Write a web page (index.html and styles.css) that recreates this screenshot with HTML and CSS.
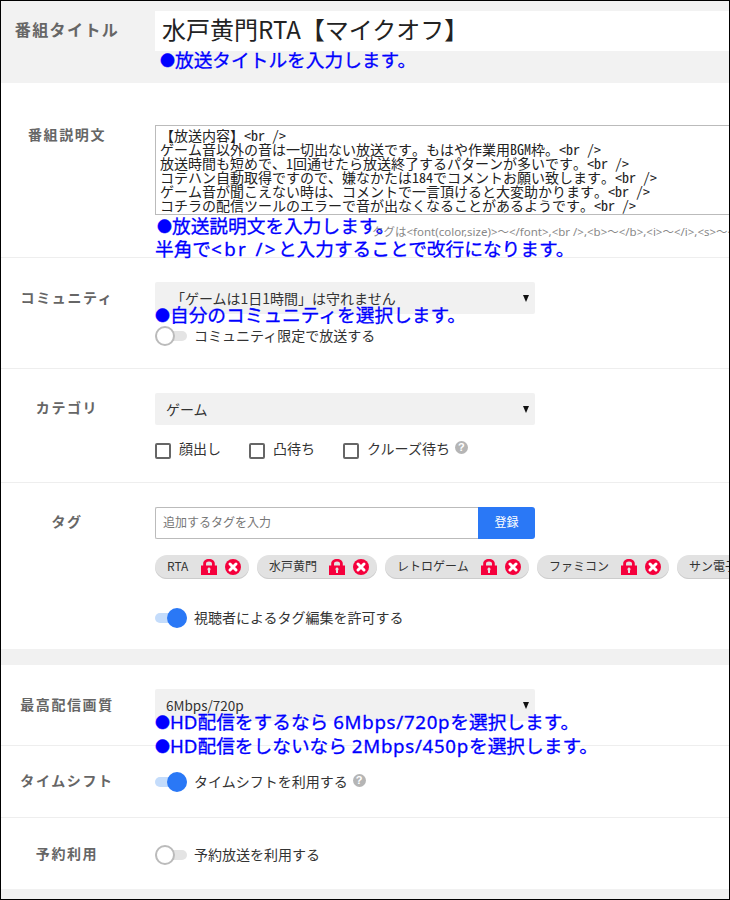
FILE: index.html
```html
<!DOCTYPE html>
<html lang="ja">
<head>
<meta charset="utf-8">
<title>番組設定</title>
<link rel="stylesheet" href="styles.css">
</head>
<body>
<main class="frame">
  <section class="row row-title">
    <h2 class="label label-strong">番組タイトル</h2>
    <div class="field">
      <div class="title-input">水戸黄門RTA【マイクオフ】</div>
    </div>
    <p class="note note-title"><span class="dot">●</span>放送タイトルを入力します。</p>
  </section>

  <section class="row row-desc">
    <h2 class="label">番組説明文</h2>
    <div class="field">
      <textarea class="desc" readonly rows="6" wrap="off">【放送内容】&lt;br /&gt;
ゲーム音以外の音は一切出ない放送です。もはや作業用BGM枠。&lt;br /&gt;
放送時間も短めで、1回通せたら放送終了するパターンが多いです。&lt;br /&gt;
コテハン自動取得ですので、嫌なかたは184でコメントお願い致します。&lt;br /&gt;
ゲーム音が聞こえない時は、コメントで一言頂けると大変助かります。&lt;br /&gt;
コチラの配信ツールのエラーで音が出なくなることがあるようです。&lt;br /&gt;</textarea>
      <p class="hint">タグは&lt;font(color,size)&gt;～&lt;/font&gt;,&lt;br /&gt;,&lt;b&gt;～&lt;/b&gt;,&lt;i&gt;～&lt;/i&gt;,&lt;s&gt;～&lt;/s&gt;</p>
    </div>
    <p class="note note-desc1"><span class="dot">●</span>放送説明文を入力します。</p>
    <p class="note note-desc2">半角で<span class="latin-wide">&lt;br /&gt;</span>と入力することで改行になります。</p>
  </section>

  <section class="row row-community">
    <h2 class="label">コミュニティ</h2>
    <div class="field">
      <div class="select select-wide">「ゲームは1日1時間」は守れません<span class="caret"></span></div>
      <div class="toggle-line toggle-community">
        <span class="toggle"><span class="knob"></span></span>
        <span class="toggle-text">コミュニティ限定で放送する</span>
      </div>
    </div>
    <p class="note note-community"><span class="dot">●</span>自分のコミュニティを選択します。</p>
  </section>

  <section class="row row-category">
    <h2 class="label">カテゴリ</h2>
    <div class="field">
      <div class="select">ゲーム<span class="caret"></span></div>
      <div class="checks">
        <label class="check"><span class="box"></span>顔出し</label>
        <label class="check"><span class="box"></span>凸待ち</label>
        <label class="check"><span class="box"></span>クルーズ待ち<span class="help help-check">?</span></label>
      </div>
    </div>
  </section>

  <section class="row row-tag">
    <h2 class="label">タグ</h2>
    <div class="field">
      <div class="tag-add">
        <div class="tag-input">追加するタグを入力</div>
        <div class="tag-btn">登録</div>
      </div>
      <div class="chips">
        <div class="chip chip-rta"><span class="chip-text">RTA</span>
          <svg class="lock" viewBox="0 0 16 16"><path class="lock-fill" d="M0 6.5h2.2V4.6C2.2 1.8 4.6 0 8 0s5.8 1.8 5.8 4.6v1.9H16V16H0z"/><path class="lock-hole" d="M5 6.5V4.8C5 3.4 6.2 2.6 8 2.6s3 .8 3 2.2v1.7zM8 8.6a1.6 1.6 0 0 1 1 2.8V14H7v-2.6a1.6 1.6 0 0 1 1-2.8z"/></svg>
          <svg class="del" viewBox="0 0 16 16"><circle class="del-bg" cx="8" cy="8" r="8"/><path class="del-x" d="M5 5l6 6M11 5l-6 6"/></svg>
        </div>
        <div class="chip chip-mito"><span class="chip-text">水戸黄門</span>
          <svg class="lock" viewBox="0 0 16 16"><path class="lock-fill" d="M0 6.5h2.2V4.6C2.2 1.8 4.6 0 8 0s5.8 1.8 5.8 4.6v1.9H16V16H0z"/><path class="lock-hole" d="M5 6.5V4.8C5 3.4 6.2 2.6 8 2.6s3 .8 3 2.2v1.7zM8 8.6a1.6 1.6 0 0 1 1 2.8V14H7v-2.6a1.6 1.6 0 0 1 1-2.8z"/></svg>
          <svg class="del" viewBox="0 0 16 16"><circle class="del-bg" cx="8" cy="8" r="8"/><path class="del-x" d="M5 5l6 6M11 5l-6 6"/></svg>
        </div>
        <div class="chip chip-retro"><span class="chip-text">レトロゲーム</span>
          <svg class="lock" viewBox="0 0 16 16"><path class="lock-fill" d="M0 6.5h2.2V4.6C2.2 1.8 4.6 0 8 0s5.8 1.8 5.8 4.6v1.9H16V16H0z"/><path class="lock-hole" d="M5 6.5V4.8C5 3.4 6.2 2.6 8 2.6s3 .8 3 2.2v1.7zM8 8.6a1.6 1.6 0 0 1 1 2.8V14H7v-2.6a1.6 1.6 0 0 1 1-2.8z"/></svg>
          <svg class="del" viewBox="0 0 16 16"><circle class="del-bg" cx="8" cy="8" r="8"/><path class="del-x" d="M5 5l6 6M11 5l-6 6"/></svg>
        </div>
        <div class="chip chip-fami"><span class="chip-text">ファミコン</span>
          <svg class="lock" viewBox="0 0 16 16"><path class="lock-fill" d="M0 6.5h2.2V4.6C2.2 1.8 4.6 0 8 0s5.8 1.8 5.8 4.6v1.9H16V16H0z"/><path class="lock-hole" d="M5 6.5V4.8C5 3.4 6.2 2.6 8 2.6s3 .8 3 2.2v1.7zM8 8.6a1.6 1.6 0 0 1 1 2.8V14H7v-2.6a1.6 1.6 0 0 1 1-2.8z"/></svg>
          <svg class="del" viewBox="0 0 16 16"><circle class="del-bg" cx="8" cy="8" r="8"/><path class="del-x" d="M5 5l6 6M11 5l-6 6"/></svg>
        </div>
        <div class="chip chip-sun"><span class="chip-text">サン電子</span></div>
      </div>
      <div class="toggle-line toggle-tag">
        <span class="toggle toggle-on"><span class="knob"></span></span>
        <span class="toggle-text">視聴者によるタグ編集を許可する</span>
      </div>
    </div>
  </section>

  <div class="band"></div>

  <section class="row row-quality">
    <h2 class="label">最高配信画質</h2>
    <div class="field">
      <div class="select select-small">6Mbps/720p<span class="caret"></span></div>
    </div>
    <p class="note note-hd1"><span class="dot">●</span>HD配信をするなら <span class="latin">6Mbps/720p</span>を選択します。</p>
    <p class="note note-hd2"><span class="dot">●</span>HD配信をしないなら <span class="latin">2Mbps/450p</span>を選択します。</p>
  </section>

  <section class="row row-shift">
    <h2 class="label">タイムシフト</h2>
    <div class="field">
      <div class="toggle-line">
        <span class="toggle toggle-on"><span class="knob"></span></span>
        <span class="toggle-text">タイムシフトを利用する</span><span class="help help-line">?</span>
      </div>
    </div>
  </section>

  <section class="row row-reserve">
    <h2 class="label">予約利用</h2>
    <div class="field">
      <div class="toggle-line">
        <span class="toggle"><span class="knob"></span></span>
        <span class="toggle-text">予約放送を利用する</span>
      </div>
    </div>
  </section>

  <div class="band band-end"></div>
</main>
</body>
</html>
```
FILE: styles.css
```css
* { box-sizing: border-box; }
html, body { margin: 0; padding: 0; }
body {
  width: 730px;
  height: 900px;
  overflow: hidden;
  background: #fff;
  font-family: "Noto Sans CJK JP", "Noto Sans", sans-serif;
  color: #333;
}
.frame {
  width: 730px;
  height: 900px;
  border: 1px solid #000;
  overflow: hidden;
  display: flex;
  flex-direction: column;
}
.row {
  position: relative;
  flex: none;
  display: grid;
  grid-template-columns: 132px 22px 1fr;
  border-bottom: 1px solid #eee;
}
.label {
  margin: 0;
  text-align: center;
  font-size: 14px;
  line-height: 20px;
  font-weight: 700;
  color: #666;
  letter-spacing: 1.6px;
}
.label-strong { font-size: 16px; letter-spacing: 1.4px; }
.field { grid-column: 3; min-width: 0; }

.row-title { height: 82px; background: #f2f2f2; padding-top: 10px; border-bottom: 0; }
.row-title .label { padding-top: 8px; }
.title-input {
  width: 600px;
  height: 40px;
  background: #fff;
  font-size: 24px;
  line-height: 36px;
  padding-left: 7px;
  color: #222;
  white-space: nowrap;
}
.row-desc { height: 175px; padding-top: 42px; }
.row-desc .label { margin-top: -1px; }
.desc {
  display: block;
  width: 620px;
  height: 90px;
  border: 1px solid #bbb;
  background: #fff;
  margin: 0;
  padding: 2px 4px;
  resize: none;
  overflow: hidden;
  font-family: "Noto Sans Mono CJK JP", "Noto Sans CJK JP", monospace;
  font-size: 14px;
  line-height: 14px;
  color: #222;
  outline: 0;
}
.hint {
  margin: 9px 0 0 217px;
  font-family: "Noto Sans", "Noto Sans CJK JP", sans-serif;
  font-size: 11.5px;
  line-height: 16px;
  color: #888;
  white-space: nowrap;
}
.row-community { height: 111px; padding-top: 24px; }
.row-community .label { padding-top: 5px; }
.select {
  position: relative;
  width: 380px;
  height: 32px;
  background: #f1f1f1;
  border-radius: 2px;
  font-size: 14px;
  line-height: 32px;
  padding-left: 11px;
  color: #333;
  white-space: nowrap;
}
.select-wide { padding-left: 16px; }
.caret {
  position: absolute;
  right: 6px;
  top: 13px;
  border-left: 3px solid transparent;
  border-right: 3px solid transparent;
  border-top: 7px solid #111;
}
.toggle-line {
  display: flex;
  align-items: center;
  gap: 7px;
  height: 20px;
}
.toggle-community { margin-top: 12px; }
.toggle {
  position: relative;
  display: block;
  flex: none;
  width: 32px;
  height: 10px;
  background: #e4e4e4;
  border-radius: 5px;
}
.knob {
  position: absolute;
  left: 0;
  top: -5px;
  width: 20px;
  height: 20px;
  background: #fff;
  border: 2px solid #bbb;
  border-radius: 50%;
}
.toggle-on { background: #c4dcfb; }
.toggle-on .knob { left: 12px; background: #2a78f6; border-color: #2a78f6; }
.toggle-text { font-size: 14px; line-height: 20px; padding-bottom: 3px; color: #333; white-space: nowrap; }

.row-category { height: 114px; padding-top: 24px; }
.row-category .label { padding-top: 4px; }
.checks { display: flex; gap: 28px; margin-top: 13px; height: 20px; }
.check { display: flex; align-items: center; gap: 8px; font-size: 14px; color: #333; white-space: nowrap; }
.box {
  display: block;
  width: 16px;
  height: 16px;
  border: 2px solid #666;
  border-radius: 2px;
  background: #fff;
  margin-top: 5px;
}
.help {
  display: block;
  flex: none;
  width: 13px;
  height: 13px;
  border-radius: 50%;
  background: #b5b5b5;
  color: #fff;
  font-size: 11px;
  font-weight: 700;
  line-height: 13px;
  text-align: center;
  font-family: "Liberation Sans", sans-serif;
}
.help-check { margin-left: -3px; margin-bottom: 2px; }
.help-line { margin-left: -2px; margin-bottom: 3px; }
.row-tag { height: 166px; padding-top: 24px; border-bottom: 0; }
.row-tag .label { padding-top: 4px; }
.tag-add { display: flex; width: 380px; height: 32px; }
.tag-input {
  flex: 1;
  border: 1px solid #bbb;
  border-right: 0;
  border-radius: 2px 0 0 2px;
  font-size: 12px;
  line-height: 28px;
  padding-left: 7px;
  color: #777;
}
.tag-btn {
  width: 57px;
  background: #2a78f6;
  border-radius: 0 3px 3px 0;
  color: #fff;
  text-align: center;
  font-size: 12px;
  line-height: 30px;
}
.chips { display: flex; gap: 8px; margin-top: 16px; width: 640px; overflow: hidden; }
.chip {
  flex: none;
  display: flex;
  align-items: center;
  height: 24px;
  background: #e2e2e2;
  border-radius: 12px;
  box-shadow: inset 0 -1px 0 #ccc;
  padding-left: 12px;
  font-size: 12px;
  color: #333;
  white-space: nowrap;
}
.chip-rta { width: 94px; }
.chip-mito { width: 120px; }
.chip-retro { width: 144px; }
.chip-fami { width: 132px; }
.chip-sun { width: 90px; }
.chip-text { flex: 1; padding-bottom: 3px; }
.lock { width: 16px; height: 16px; flex: none; }
.lock-fill { fill: #f5003c; }
.lock-hole { fill: #e2e2e2; }
.del { width: 16px; height: 16px; flex: none; margin: 0 8px 0 8px; }
.del-bg { fill: #f5003c; }
.del-x { stroke: #fff; stroke-width: 3; stroke-linecap: round; fill: none; }
.toggle-tag { margin-top: 29px; }

.band { height: 16px; background: #f1f1f1; flex: none; }
.row-quality { height: 81px; padding-top: 24px; }
.row-quality .label { padding-top: 5px; }
.select-small { font-size: 13.5px; }
.row-shift { height: 72px; padding-top: 26px; }
.row-shift .label { margin-top: -2px; }
.row-reserve { height: 71px; padding-top: 27px; border-bottom: 0; }
.row-reserve .label { margin-top: -2px; }
.band-end { flex: 1; }

.note {
  position: absolute;
  margin: 0;
  color: #0000ff;
  font-size: 18.7px;
  line-height: 20px;
  white-space: nowrap;
  font-family: "Noto Sans", "Noto Sans CJK JP", sans-serif;
  -webkit-text-stroke: 0.3px #0000ff;
}
.dot { display: inline-block; width: 15px; font-size: 15px; line-height: 20px; vertical-align: top; }
.latin { letter-spacing: 0.7px; }
.latin-wide { letter-spacing: 2.4px; }
.note-title { left: 159px; top: 49px; }
.note-desc1 { left: 156px; top: 133px; }
.note-desc2 { left: 154px; top: 156px; }
.note-community { left: 154px; top: 47px; }
.note-hd1 { left: 154px; top: 47px; }
.note-hd2 { left: 154px; top: 71px; }
```
